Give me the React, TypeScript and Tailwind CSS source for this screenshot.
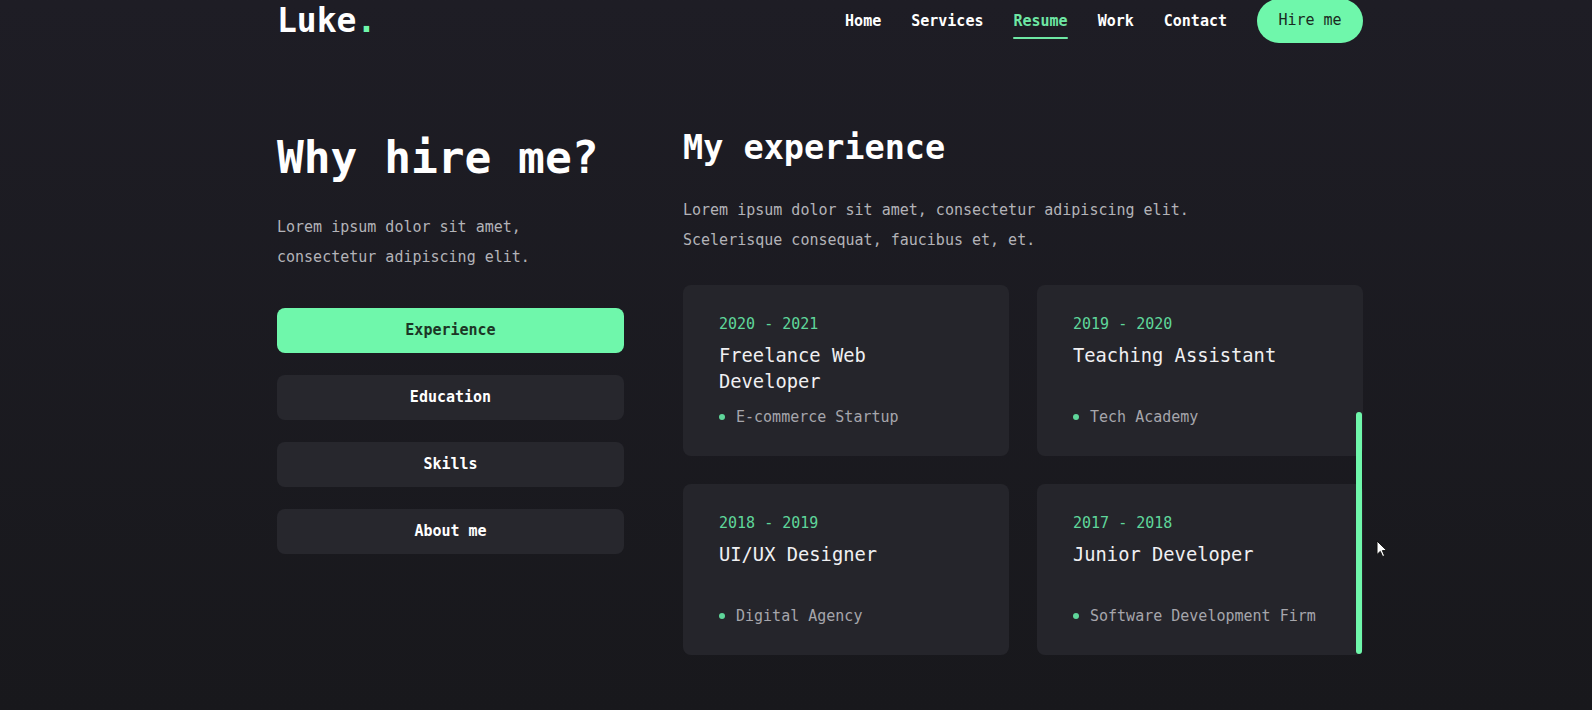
import { memo } from "react";

const navLinks = [
  { href: "#home", label: "Home" },
  { href: "#services", label: "Services" },
  { href: "#resume", label: "Resume", active: true },
  { href: "#work", label: "Work" },
  { href: "#contact", label: "Contact" },
];

const tabs = ["Experience", "Education", "Skills", "About me"];

const experience = [
  { period: "2020 - 2021", role: "Freelance Web Developer", company: "E-commerce Startup" },
  { period: "2019 - 2020", role: "Teaching Assistant", company: "Tech Academy" },
  { period: "2018 - 2019", role: "UI/UX Designer", company: "Digital Agency" },
  { period: "2017 - 2018", role: "Junior Developer", company: "Software Development Firm" },
];

const Header = memo(function Header() {
  return (
    <header className="flex h-[41px] items-center justify-between">
      {/* Logo */}
      <a href="#home" className="text-[33px] font-semibold leading-none text-white">
        Luke<span className="text-[#6ff7ab]">.</span>
      </a>

      <nav className="flex items-center gap-[30px]">
        {navLinks.map((link) => (
          <a
            key={link.href}
            href={link.href}
            className={`relative text-[15px] font-semibold leading-[20px] ${
              link.active ? "text-[#6ee7a4]" : "text-white"
            }`}
          >
            {link.label}
            {link.active && (
              <span className="absolute -bottom-[8px] left-0 right-0 h-[2px] rounded-full bg-[#6ee7a4]"></span>
            )}
          </a>
        ))}
        <a
          href="#contact"
          className="flex h-[44px] w-[106px] items-center justify-center rounded-full bg-[#6ff7ab] text-[15px] font-medium text-[#1a2a21]"
        >
          Hire me
        </a>
      </nav>
    </header>
  );
});

function ExperienceCard({ period, role, company }: { period: string; role: string; company: string }) {
  return (
    <div className="flex h-[171px] flex-col rounded-lg bg-[#25252b] px-9 py-7">
      <span className="text-[15px] font-medium leading-[22px] text-[#5fd69a]">{period}</span>
      <h3 className="mt-2 min-h-[52px] text-[18.75px] leading-[26px] text-[#f0f0f2]">{role}</h3>
      <div className="mt-[11px] flex items-center gap-[11px] text-[15px] leading-[22px] text-[#a6a6ac]">
        <span className="h-[6px] w-[6px] shrink-0 rounded-full bg-[#5fd69a]"></span>
        {company}
      </div>
    </div>
  );
}

export default function App() {
  return (
    <div className="relative min-h-screen bg-gradient-to-b from-[#1e1d25] to-[#18181c] font-['DejaVu_Sans_Mono',monospace]">
      <div className="ml-[277px] w-[1086px]">
        <Header />

        <main className="mt-[87px] grid grid-cols-[347px_680px] gap-x-[59px]">
          {/* Left column */}
          <div className="flex flex-col">
            <h1 className="text-[44.5px] font-semibold leading-[59px] text-white">Why hire me?</h1>
            <p className="mt-[25px] text-[15px] leading-[30px] text-[#b3b3b8]">
              Lorem ipsum dolor sit amet, consectetur adipiscing elit.
            </p>
            <div className="mt-[36px] flex flex-col gap-[22px]">
              {tabs.map((tab, i) => (
                <button
                  key={tab}
                  className={`flex h-[45px] items-center justify-center rounded-lg text-[15px] font-semibold ${
                    i === 0 ? "bg-[#6ff7ab] text-[#1c3626]" : "bg-[#27272d] text-white"
                  }`}
                >
                  {tab}
                </button>
              ))}
            </div>
          </div>

          {/* Right column */}
          <div className="flex flex-col">
            <h2 className="text-[33.5px] font-semibold leading-[40px] text-white">My experience</h2>
            <p className="mt-[27px] max-w-[600px] text-[15px] leading-[30px] text-[#b3b3b8]">
              Lorem ipsum dolor sit amet, consectetur adipiscing elit. Scelerisque consequat, faucibus et, et.
            </p>
            <div className="relative mt-[30px]">
              <div className="grid grid-cols-2 gap-[28px]">
                {experience.map((item) => (
                  <ExperienceCard key={item.period} {...item} />
                ))}
              </div>
              {/* scroll thumb */}
              <div className="absolute bottom-[1px] right-[1px] top-[127px] w-[6px] rounded-full bg-[#6ff7ab]"></div>
            </div>
          </div>
        </main>
      </div>

      {/* mouse pointer */}
      <svg className="absolute left-[1376px] top-[540px]" width="12" height="18" viewBox="0 0 12 18">
        <path d="M1 1 L1 14.5 L4.3 11.4 L6.6 16.6 L8.6 15.7 L6.4 10.6 L10.8 10.6 Z" fill="#fff" stroke="#111" strokeWidth="1" strokeLinejoin="round" />
      </svg>
    </div>
  );
}
